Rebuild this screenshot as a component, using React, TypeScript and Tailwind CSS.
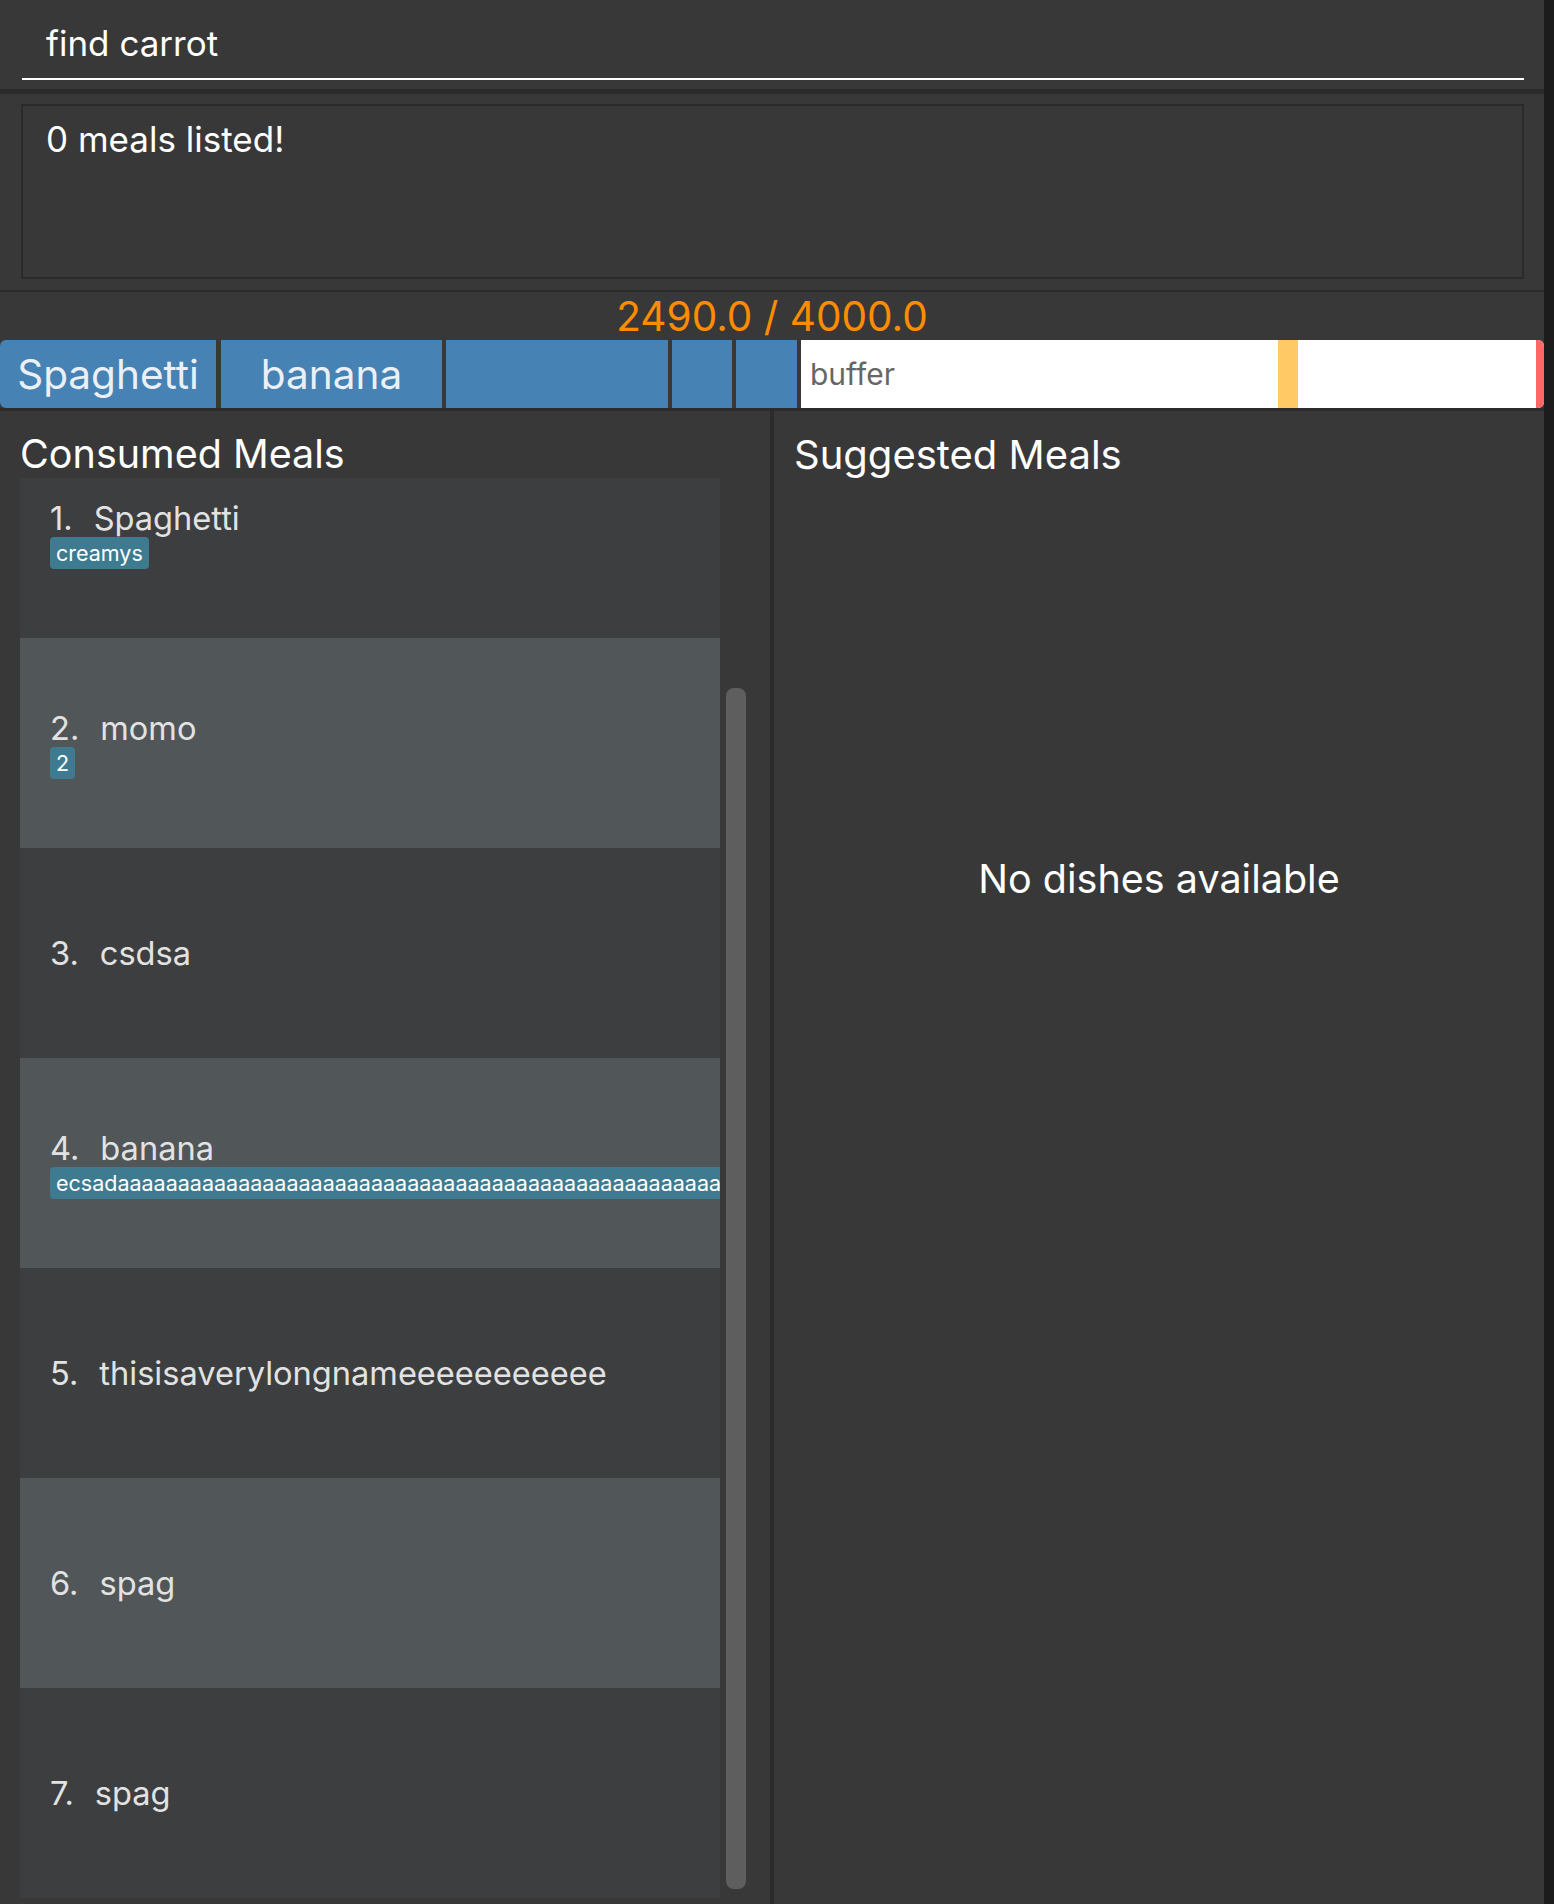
import React from "react";

type Meal = { name: string; tags: string[] };

const meals: Meal[] = [
  { name: "Spaghetti", tags: ["creamys"] },
  { name: "momo", tags: ["2"] },
  { name: "csdsa", tags: [] },
  {
    name: "banana",
    tags: ["ecsad" + "a".repeat(80)],
  },
  { name: "thisisaverylongnameeeeeeeeeee", tags: [] },
  { name: "spag", tags: [] },
  { name: "spag", tags: [] },
];

function MealCard({ meal, index }: { meal: Meal; index: number }) {
  const odd = index % 2 === 1;
  const hasTags = meal.tags.length > 0;
  return (
    <div
      className={
        "h-[210px] shrink-0 w-[700px] overflow-hidden pl-[30px] flex flex-col " +
        (odd ? "bg-[#515658] " : "bg-[#3c3e3f] ") +
        (hasTags ? "pt-[72px]" : "justify-center")
      }
    >
      <div className="flex items-baseline h-[36px] leading-[36px] text-[32.6px] text-[#e2e2e2] whitespace-nowrap">
        <span className="pr-[21px]">{index + 1}.</span>
        <span>{meal.name}</span>
      </div>
      {hasTags && (
        <div className="flex gap-[6px] mt-[1px]">
          {meal.tags.map((t, i) => (
            <span
              key={i}
              className="h-[32px] leading-[32px] px-[6px] rounded-[4px] bg-[#3e7b91] text-white text-[21.5px] whitespace-nowrap"
            >
              {t}
            </span>
          ))}
        </div>
      )}
    </div>
  );
}

export default function App() {
  return (
    <div
      className="w-[1554px] h-[1904px] flex bg-[#1c1c1c] overflow-hidden"
      style={{ fontFamily: "Inter, 'Noto Sans', sans-serif" }}
    >
      <div className="w-[1544px] h-full flex flex-col bg-[#383838]">
        {/* Command box */}
        <div className="h-[89px] shrink-0 px-[22px] pt-[22px]">
          <div className="pl-[24px] h-[42px] leading-[42px] text-[35px] text-white">
            find carrot
          </div>
          <div className="mt-[14px] h-[2px] w-[1502px] bg-white" />
        </div>
        <div className="h-[5px] shrink-0 bg-[#2b2b2b]" />

        {/* Result display */}
        <div className="h-[196px] shrink-0 pt-[10px] px-[21px]">
          <div className="h-[175px] w-[1503px] border-2 border-[#2a2a2a] pl-[23px] pt-[12px]">
            <div className="h-[42px] leading-[42px] text-[35px] text-white">
              0 meals listed!
            </div>
          </div>
        </div>
        <div className="h-[2px] shrink-0 bg-[#2b2b2b]" />

        {/* Calories */}
        <div className="h-[48px] shrink-0 pt-[1px] text-center leading-[47px] text-[40.5px] text-[#ff8c00]">
          2490.0 / 4000.0
        </div>

        {/* Progress bar */}
        <div className="h-[68px] shrink-0 flex text-[40.5px] leading-[47px] text-[#eaf0f6]">
          <div className="w-[216px] bg-[#4682b4] rounded-l-[6px] flex items-center justify-center whitespace-nowrap">
            Spaghetti
          </div>
          <div className="w-[5px]" />
          <div className="w-[221px] bg-[#4682b4] flex items-center justify-center">
            banana
          </div>
          <div className="w-[4px]" />
          <div className="w-[222px] bg-[#4682b4]" />
          <div className="w-[4px]" />
          <div className="w-[60px] bg-[#4682b4]" />
          <div className="w-[4px]" />
          <div className="w-[61px] bg-[#4682b4]" />
          <div className="w-[4px]" />
          <div className="flex-1 flex bg-white rounded-r-[6px] overflow-hidden">
            <div className="w-[477px] flex items-center pl-[9px] text-[30px] text-[#666666]">
              buffer
            </div>
            <div className="w-[20px] bg-[#ffc966]" />
            <div className="flex-1" />
            <div className="w-[8px] bg-[#ff6666]" />
          </div>
        </div>
        <div className="h-[3px] shrink-0 bg-[#2b2b2b]" />

        {/* Columns */}
        <div className="flex-1 min-h-0 flex">
          {/* Left */}
          <div className="w-[770px] flex flex-col">
            <div className="pt-[20px] pl-[20px] h-[67px] leading-[47px] text-[39.5px] text-white shrink-0 whitespace-nowrap">
              Consumed Meals
            </div>
            <div className="flex ml-[20px] h-[1420px] shrink-0">
              <div className="w-[700px] h-full overflow-hidden flex flex-col">
                <div className="-mt-[50px] flex flex-col">
                  {meals.map((m, i) => (
                    <MealCard key={i} meal={m} index={i} />
                  ))}
                </div>
              </div>
              <div className="w-[30px] pl-[6px]">
                <div className="mt-[210px] h-[1201px] w-[20px] rounded-[8px] bg-[#5e5e5e]" />
              </div>
            </div>
          </div>
          <div className="w-[4px] bg-[#2b2b2b]" />
          {/* Right */}
          <div className="flex-1 flex flex-col">
            <div className="pt-[20px] pl-[20px] h-[67px] leading-[47px] text-[40px] text-white shrink-0 whitespace-nowrap">
              Suggested Meals
            </div>
            <div className="mt-[378px] text-center leading-[46px] text-[39.5px] text-white">
              No dishes available
            </div>
          </div>
        </div>
      </div>
      <div className="flex-1" />
    </div>
  );
}
